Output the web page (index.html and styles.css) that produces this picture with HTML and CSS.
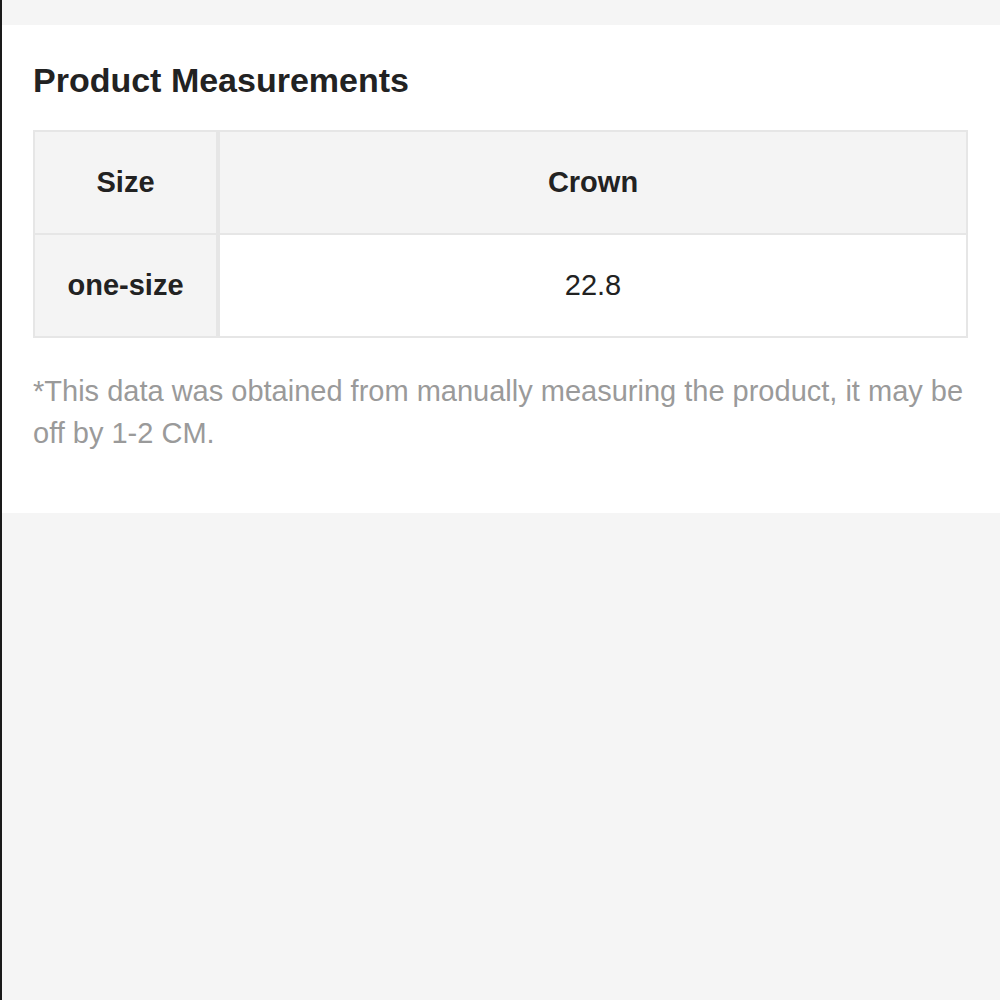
FILE: index.html
```html
<!DOCTYPE html>
<html lang="en">
<head>
    <meta charset="UTF-8">
    <meta name="viewport" content="width=device-width, initial-scale=1.0">
    <title>Product Measurements</title>
    <link rel="stylesheet" href="styles.css">
</head>
<body>
    <div class="panel">
        <h2 class="title">Product Measurements</h2>

        <table class="size-table">
            <tr class="head-row">
                <th class="size-col">Size</th>
                <th>Crown</th>
            </tr>
            <tr>
                <th class="size-col">one-size</th>
                <td>22.8</td>
            </tr>
        </table>

        <p class="note">*This data was obtained from manually measuring the product, it may be off by 1-2 CM.</p>
    </div>
</body>
</html>
```

FILE: styles.css
```css
body {
    background-color: #f5f5f5;
    color: #222;
    margin: 0;
    padding: 0;
    min-height: 1000px;
    border-left: 2px solid #1a1a1a;
    font-family: "Liberation Sans", Arial, sans-serif;
}
.panel {
    background-color: #fff;
    margin-top: 25px;
    padding: 36px 32px 59px 31px;
}
.title {
    font-size: 34px;
    line-height: 38px;
    font-weight: bold;
    margin: 0 0 31px 0;
    color: #222;
}
.size-table {
    width: 100%;
    border-collapse: collapse;
    border: 2px solid #e6e6e6;
    font-size: 29px;
}
.size-table th,
.size-table td {
    height: 101px;
    padding: 0;
    text-align: center;
    vertical-align: middle;
    border: 2px solid #e6e6e6;
}
.size-table th {
    font-weight: bold;
    background-color: #f4f4f4;
}
.size-table td {
    background-color: #fff;
}
.size-table .size-col {
    width: 181px;
    border-right: 4px solid #e6e6e6;
}
.note {
    margin: 32px 0 0 0;
    font-size: 29px;
    line-height: 42px;
    color: #9a9a9a;
}
```
